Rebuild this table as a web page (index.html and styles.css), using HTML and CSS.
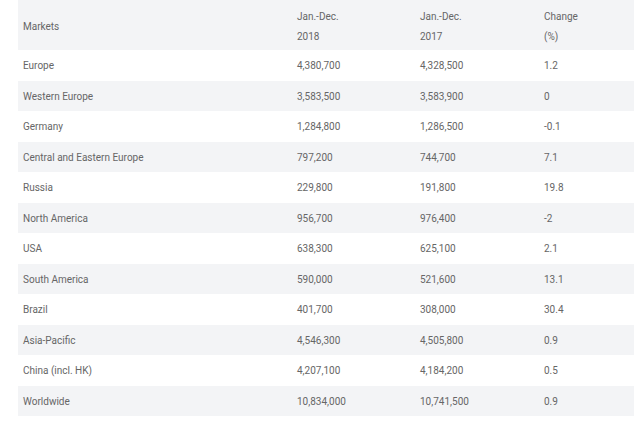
FILE: index.html
```html
<!DOCTYPE html>
<html>
<head>
<meta charset="utf-8">
<link rel="stylesheet" href="styles.css">
</head>
<body>
<table class="sales">
  <colgroup>
    <col class="c1"><col class="c2"><col class="c3"><col class="c4">
  </colgroup>
  <thead>
    <tr><th>Markets</th><th>Jan.-Dec.<br>2018</th><th>Jan.-Dec.<br>2017</th><th>Change<br>(%)</th></tr>
  </thead>
  <tbody>
    <tr><td>Europe</td><td>4,380,700</td><td>4,328,500</td><td>1.2</td></tr>
    <tr><td>Western Europe</td><td>3,583,500</td><td>3,583,900</td><td>0</td></tr>
    <tr><td>Germany</td><td>1,284,800</td><td>1,286,500</td><td>-0.1</td></tr>
    <tr><td>Central and Eastern Europe</td><td>797,200</td><td>744,700</td><td>7.1</td></tr>
    <tr><td>Russia</td><td>229,800</td><td>191,800</td><td>19.8</td></tr>
    <tr><td>North America</td><td>956,700</td><td>976,400</td><td>-2</td></tr>
    <tr><td>USA</td><td>638,300</td><td>625,100</td><td>2.1</td></tr>
    <tr><td>South America</td><td>590,000</td><td>521,600</td><td>13.1</td></tr>
    <tr><td>Brazil</td><td>401,700</td><td>308,000</td><td>30.4</td></tr>
    <tr><td>Asia-Pacific</td><td>4,546,300</td><td>4,505,800</td><td>0.9</td></tr>
    <tr><td>China (incl. HK)</td><td>4,207,100</td><td>4,184,200</td><td>0.5</td></tr>
    <tr><td>Worldwide</td><td>10,834,000</td><td>10,741,500</td><td>0.9</td></tr>
  </tbody>
</table>
</body>
</html>
```
FILE: styles.css
```css
html, body {
  margin: 0;
  padding: 0;
  background: #fff;
}
body {
  padding: 0 6px 0 18px;
  font-family: Roboto, "Liberation Sans", sans-serif;
  font-size: 10px;
  color: #666;
}
.sales {
  width: 616px;
  border-collapse: collapse;
  table-layout: fixed;
}
.c1 { width: 274px; }
.c2 { width: 123px; }
.c3 { width: 124px; }
.c4 { width: 95px; }
.sales th {
  font-weight: normal;
  text-align: left;
  padding: 7px 5px 3px;
  line-height: 20px;
  height: 40px;
  background: #f3f4f6;
  vertical-align: middle;
}
.sales td {
  padding: 2px 5px 0;
  height: 28.5px;
  line-height: 14px;
  vertical-align: middle;
}
.sales tbody tr:nth-child(even) td {
  background: #f3f4f6;
}
```
